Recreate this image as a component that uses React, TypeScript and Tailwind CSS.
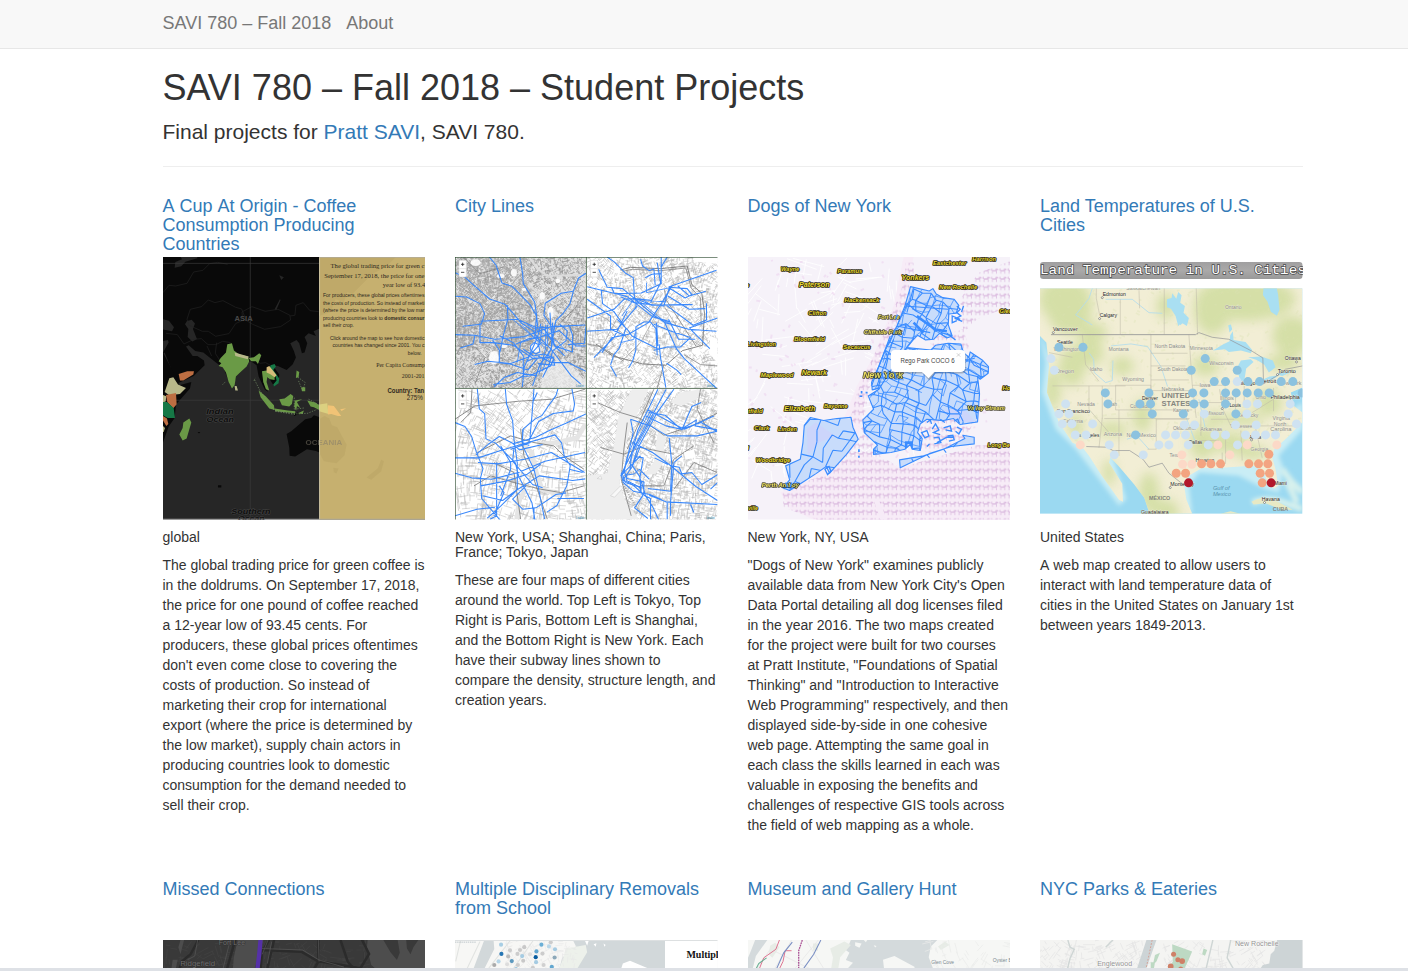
import React from "react";

/* ---------- helpers for generated map texture ---------- */

function rng(seed: number) {
  let s = seed;
  return () => {
    s = (s * 1664525 + 1013904223) % 4294967296;
    return s / 4294967296;
  };
}

/* Short street segments at two perpendicular headings that drift over the area */
function streets(x: number, y: number, w: number, h: number, n: number, len: number, seed: number, base = 0, drift = 0.9) {
  const r = rng(seed);
  let d = "";
  for (let i = 0; i < n; i++) {
    const px = x + r() * w;
    const py = y + r() * h;
    const a = base + Math.sin(px / 90 + seed) * drift + Math.cos(py / 75) * drift * 0.6 + (r() > 0.5 ? Math.PI / 2 : 0);
    const l = len * (0.4 + r());
    d += `M${px.toFixed(0)} ${py.toFixed(0)}l${(Math.cos(a) * l).toFixed(0)} ${(Math.sin(a) * l).toFixed(0)}`;
  }
  return d;
}

/* Jittered grid used for district boundaries */
function mesh(x: number, y: number, w: number, h: number, step: number, jitter: number, seed: number, skip = 0.12, shear = 0) {
  const r = rng(seed);
  const cols = Math.ceil(w / step) + 1;
  const rows = Math.ceil(h / step) + 1;
  const pts: number[][][] = [];
  for (let j = 0; j < rows; j++) {
    pts.push([]);
    for (let i = 0; i < cols; i++) {
      const gx = i * step;
      const gy = j * step;
      const bend = Math.sin(gx / 70 + gy / 110) * 14;
      pts[j].push([
        x + gx + (r() - 0.5) * jitter - gy * shear + bend,
        y + gy + (r() - 0.5) * jitter + gx * shear + Math.cos(gx / 60) * 12,
      ]);
    }
  }
  let d = "";
  for (let j = 0; j < rows; j++)
    for (let i = 0; i < cols; i++) {
      const p = pts[j][i];
      if (i + 1 < cols && r() > skip) d += `M${p[0].toFixed(0)} ${p[1].toFixed(0)}L${pts[j][i + 1][0].toFixed(0)} ${pts[j][i + 1][1].toFixed(0)}`;
      if (j + 1 < rows && r() > skip) d += `M${p[0].toFixed(0)} ${p[1].toFixed(0)}L${pts[j + 1][i][0].toFixed(0)} ${pts[j + 1][i][1].toFixed(0)}`;
    }
  return d;
}

type T = [string, number, number, number, number?];

/* A map label stretched to its own width */
function Labels({ items }: { items: T[] }) {
  return (
    <>
      {items.map(([t, x, y, s, l]) => (
        <text key={t + x} x={x} y={y} fontSize={s} textLength={l} lengthAdjust="spacingAndGlyphs">{t}</text>
      ))}
    </>
  );
}

/* ---------- Coffee map ---------- */

const coffeeSerif: T[] = [
  ["The global trading price for green c", 506, 35, 20, 282],
  ["September 17, 2018, the price for one", 487, 65, 20, 301],
  ["year low of 93.4", 663, 94, 20, 127],
  ["Per Capita Consump", 643, 333, 17, 146],
  ["2001-201", 720, 365, 17, 68],
];
const coffeeSans: T[] = [
  ["For producers, these global prices oftentimes", 483, 124, 16, 305],
  ["the costs of production. So instead of marketi", 483, 146, 16, 305],
  ["(where the price is determined by the low mar", 483, 169, 16, 305],
  ["sell their crop.", 483, 213, 16, 93],
  ["Click around the map to see how domestic", 504, 252, 16, 284],
  ["countries has changed since 2001. You c", 512, 274, 16, 276],
  ["below.", 738, 297, 16, 41],
];

function CoffeeMap() {
  return (
    <svg viewBox="3 3 788 788" className="block h-[262.5px] w-full" fontFamily="'Liberation Sans', sans-serif">
      <rect x="3" y="3" width="788" height="788" fill="#262626" />
      <path fill="#090909" d="M3 3H480V215L455 226 462 240 440 232 428 243 436 262 428 290 420 292 412 262 404 252 385 262 396 285 402 305 392 326 374 342 348 330 332 328 352 356 350 378 336 390 322 368 308 362 304 378 318 408 308 400 290 362 284 328 270 318 254 318 250 334 222 362 214 394 206 390 190 350 184 334 170 326 160 318 124 290 100 285 80 268 72 272 92 300 106 300 126 314 128 328 95 360 48 382 30 345 8 290 3 294Z" />
      <path fill="#090909" d="M3 290L18 318 45 368 52 388 88 378 84 398 42 446 38 486 20 512 3 560Z" />
      <path fill="#262626" d="M3 190l18 4 15 20-6 12-27-5ZM75 195l14-4 10 12-6 16 12 30-14 8-14-14 2-24-10-14ZM3 255l15-3 2 8-17 30ZM338 160l16-30 2 2-13 30ZM352 58l14 6-8 8ZM40 18l20-8-4-7h50v4l-36 10-12 14-20 4Z" />
      <path fill="#090909" d="M374 534L388 526 402 514 430 490 448 486 456 478 480 486V593L462 585 435 580 400 602 383 600 382 575ZM168 688h10v7h-10ZM107 528l8 0-4 5ZM395 476l12-6 4 4-14 6Z" />
      <path fill="none" stroke="#222" strokeWidth="2" d="M3 110l18-22 20 2 34-8 20-34 28-5 20-20 24-4 30 6M75 190l10-30 34-8 20-20 20 8 24-6 38 20 18 5 12 30-30 14-20 30-40 8-22-15-18 0-40-18ZM240 168l30-16 40 14 38-6 36 18 2 14-30 20-48 8-36-15-30-18ZM385 180l14-2 3-30 22-8 20 24 26 3M12 232l34 4 20 28 30-14 22-2 20 18 24 0 20-10 24 4M135 270l14 30M164 260l-4 32 14 22M222 290l28 14 14-2M275 310l20 12 16-2 14 8" />
      <path d="M3 22H472M3 433H472M265 3V791" stroke="#3d3d3d" strokeWidth="2" />
      <path fill="#6a9a46" d="M196 265l14-3 6 22 16 12 26 6 4 14-8 16-22 20-10 10-4 26-8 10-10-20-8-28-10-16-12-4 8-8-8-6 6-10 16-16ZM260 306l16-2 16-12 6 6-10 26-6-8-14 0ZM300 346l14-2 8 6 16 10 0 12-14-2-8-6-2 14 8 26-10-4-8-22ZM64 500l18-12 6 12-14 48-12 6-10-18 10-20ZM290 404l22 18 24 26 2 14-16-4-26-34ZM352 430l16-2 18-14 8 6-4 24-8 8-22-4ZM338 458l40 6 22 2 0 6-60-6ZM399 434l22-4-16 8 10 18-10-6-2 14-6-12ZM404 344l8 4-2 16-8 2ZM418 394h12v12h-10ZM436 434l24 6 12 8v14l-16-8-10-2ZM408 472l18-8-4 10Z" />
      <path fill="#b8b88a" d="M218 290l42 12-2 8-38-10ZM218 390h6l4 14-8 0ZM22 367l12-3 14 22 24 10-18 18-32 4-14-10ZM3 417l10 4-2 16-8 2ZM3 510l6 6-4 12H3Z" />
      <path fill="#bd6e42" d="M50 354l26-8 20 0-2 10-30 18-10 0ZM12 417l30-6 2 34-10 12-18-18ZM3 480l12 8 4 16-6 6-10-16Z" />
      <path fill="#167846" d="M3 438l12 0 20 18 4 30-22 0-14-8ZM326 328l12-4 4 8-8 10 18 26-2 14-14 10-2-6 10-12-4-16-18-18Z" />
      <path fill="#d5bc79" d="M314 334l8-4 8 10 14 18-6 6-14-10-10-4Z" />
      <path fill="none" stroke="#79936a" strokeWidth="2" strokeDasharray="4 4" d="M278 372l16 32 44 60 64 10 36-2 28-12M408 364l22 16-8 24M398 460l30-4M340 466l60 10M276 374l4-8M182 386l8-8M397 425l0 35M440 430l30 16M410 375l10 25" />
      <g fontWeight="bold" fontStyle="italic" fill="#0d0d0d" stroke="#454545" strokeWidth="2.400" paintOrder="stroke">
        <Labels items={[["Indian", 133, 474, 21, 82], ["Ocean", 134, 499, 21, 82], ["Southern", 208, 774, 21, 118], ["Ocean", 228, 797, 21, 80]]} />
      </g>
      <text x="218" y="196" textLength="54" lengthAdjust="spacingAndGlyphs" fontSize="20" fontWeight="bold" fill="#494949">ASIA</text>
      <rect x="472" y="3" width="319" height="788" fill="#c6b06f" />
      <path fill="#bda768" d="M472 3h230l-30 30-40 20-60 60-16-4-10 30-25-10-15 40-34 10ZM472 490l16-10 14 8 8 20 16 6 28 52-6 32-24 24-38-6-12-22H472ZM514 636l16 2-6 15-8-4ZM614 665l34-28 10-25 8 4-8 30-30 26Z" opacity=".8" />
      <path d="M472 446l24-4 4 32-28-8Z" fill="#dbd080" /><path d="M498 448l18 2 22 30-10 0-20-6-10 2ZM535 460l18-3-14 8ZM556 450l6 8" fill="#f1c376" />
      <text x="431" y="567" textLength="110" lengthAdjust="spacingAndGlyphs" fontSize="21" fontWeight="bold" fill="#80796a" opacity=".5">OCEANIA</text>
      <path d="M473 4V791" stroke="#ddd6be" strokeWidth="2" />
      <g fill="#2e2920" fontFamily="'Liberation Serif', serif"><Labels items={coffeeSerif} /></g>
      <g fill="#2e2920">
        <Labels items={coffeeSans} />
        <text x="483" y="191" fontSize="16" textLength="305" lengthAdjust="spacingAndGlyphs">producing countries look to <tspan fontWeight="bold">domestic consur</tspan></text>
        <text x="677" y="410" fontSize="19" fontWeight="bold" textLength="110" lengthAdjust="spacingAndGlyphs">Country: Tan</text>
        <text x="735" y="431" fontSize="19" textLength="48" lengthAdjust="spacingAndGlyphs">275%</text>
      </g>
      <path d="M3 790H791M472 4H791" stroke="#aaa" strokeWidth="2" />
    </svg>
  );
}

/* ---------- Four city subway maps ---------- */

const tokyoA = streets(3, 3, 392, 392, 5200, 9, 11);
const tokyoWest = streets(3, 3, 230, 280, 2600, 7, 13);
const tokyoB = streets(3, 3, 392, 392, 700, 10, 19);
const parisA = streets(400, 3, 392, 392, 2700, 12, 23);
const shangA = streets(3, 400, 392, 392, 1050, 26, 31, 0.15, 0.35);
const nycA = streets(400, 400, 392, 392, 2900, 15, 47, 0.45, 0.25);
const pale = [[65, 20, 30, 20], [140, 60, 24, 12], [180, 50, 18, 22], [244, 275, 32, 30], [120, 305, 30, 40], [265, 120, 16, 22], [290, 170, 18, 36], [150, 270, 18, 12], [312, 75, 14, 14], [210, 100, 14, 10]];

function CityLinesMap() {
  return (
    <svg viewBox="3 3 788 788" className="block h-[262.5px] w-full" fontFamily="'Liberation Sans', sans-serif" fill="none">
      <defs>
        <clipPath id="q1"><rect x="3" y="3" width="393" height="393" /></clipPath>
        <clipPath id="q2"><rect x="399" y="3" width="392" height="393" /></clipPath>
        <clipPath id="q3"><rect x="3" y="399" width="393" height="392" /></clipPath>
        <clipPath id="q4"><rect x="399" y="399" width="392" height="392" /></clipPath>
      </defs>
      <rect x="3" y="3" width="788" height="788" fill="#fff" />
      <g clipPath="url(#q1)">
        <rect x="3" y="3" width="393" height="393" fill="#e2e2e2" />
        <path d={tokyoA} stroke="#949494" strokeWidth="1.800" />
        <path d={tokyoWest} stroke="#a2a2a2" strokeWidth="1.800" />
        <path d={tokyoB} stroke="#eee" strokeWidth="2" />
        <path d="M225 3l24 34 30 22 117-2M222 85l46 40 20 60 14 30" stroke="#dcdcdc" strokeWidth="6" />
        <g fill="#fff" opacity=".9">{pale.map(([x, y, w, h]) => <ellipse key={x + y} cx={x} cy={y} rx={w / 2} ry={h / 2} />)}</g>
        <path d="M262 396l4-50 24-28 40-10 20 20 46 50v20Z" fill="#eee" opacity=".75" />
        <path d="M28 3l50 50 70-20M3 270l60 4 30 30-30 80M340 200l20 30-8 60M200 396l40-25 30-70 40-90 86-90M150 130l30 160" stroke="#777" strokeWidth="2" />
      </g>
      <g clipPath="url(#q2)">
        <path d={parisA} stroke="#b3b3b3" strokeWidth="1.600" />
        <path d="M718 3h73v20l-60-6ZM770 240l21 10v70l-26-28ZM555 215l16-6 12 18-14 12-16-6ZM610 215l14 4 0 24-12-6ZM720 268l24 14-14 16-16-8Z" fill="#fff" />
        <path d="M430 300l100-190 30 20 70 20 50 80 60 40M400 160l60 30 70 66M500 320l60-60 100-180" stroke="#999" strokeWidth="2" />
        <path d="M500 42l30-8 90 4 80-8 14 56 30 26 8 60-6 96-60 16-50 44-70-4-90-24-50-36" stroke="#6f6f6f" strokeWidth="2.500" />
        <path d="M506 46l30-6 84 4 76-8 16 60 28 30 2 80M400 264l40 8 70 44M690 296l50 30 50 4M630 326l-20 70M632 100l4 30 90 140" stroke="#888" strokeWidth="2.500" />
        <path d="M540 145l70 40 30 20 40 90" stroke="#ddd" strokeWidth="7" />
      </g>
      <g clipPath="url(#q3)">
        <path d={shangA} stroke="#b9b9b9" strokeWidth="1.600" />
        <path d="M188 791l8-60 20-30M210 570l24 20 10 50 20 60 60 20M250 565l60-5 60-14 24-40" stroke="#e5e5e5" strokeWidth="14" />
        <path d="M3 490l60-40 130-14 100-6 100-30M20 500l30-30 4-70M70 590l40-20 60-30 70 20 60 10 30 30 60 40M60 690l50-30 70 20 80 20 60 10 70-20M200 520l10 80 30 70 40 120M120 620l60 30 20 140" stroke="#787878" strokeWidth="2.500" />
      </g>
      <g clipPath="url(#q4)">
        <path d={nycA} stroke="#b4b4b4" strokeWidth="1.500" />
        <path d="M534 400h50l-28 60-34 80-18 90-8 50 20 60 40 51H400V660l60-8 20-80 14-90Z" fill="#eee" />
        <path d="M552 640l-40 20-6 20 20 40 40 60" stroke="#aaa" strokeWidth="6" strokeDasharray="3 4" />
        <path d="M650 440l30-30 60-10-10 30-50 20ZM624 500l16 14-10 70 6 26-30 44-36 4 30-40 10-80Z" fill="#ededed" />
        <path d="M430 440l70 30 60 18 70 50 80-26 80-40M440 575l70 20 50-20 100 20M520 500l-10 80-8 90 30 110M600 400l-80 180M560 690l70 0 30-80 60-40M740 400l-10 60 50 100M660 700l60-80 70 30" stroke="#7e7e7e" strokeWidth="2.500" />
        <path d="M760 700l24-10-4 40-18 10ZM690 590l30-10 6 24-30 8Z" fill="#fff" />
        <path d="M470 720l30-30 8 6-26 28ZM430 668l10-8 4 10Z" fill="#f8f8f8" stroke="#aaa" />
      </g>
      <g stroke="#3a88fb" strokeWidth="3.200" strokeLinejoin="round">
        <g clipPath="url(#q1)">
          <path d="M3 50l28 12 22 20 54 47 46 16 20 22 30 35 34 22 20 30M3 121l35 2 40 20 14 30-10 32-56 6M106 3l20 24 18 54 30 10 20 20 34 35 20 34 4 40M198 3l8 50 2 30 34 55 6 40-6 70M396 52l-22 14-16 40-36 6-48 30-4 36 20 30 10 60M358 108l-10 36-22 30-20 20-12 60M3 236l60 2-6 26-38 12M62 238l60 12 90-8 80-30 102-5M78 200l0 60 40 0 60 8 60 40 50-4M80 196l110-6 60 26 96-6 10 28 0 50-50-16-40-60M116 252l20 30 0 38 30 4 56-20 40-44M62 326l40-10 60 6 60 20 30-36M160 148l2 40-14 50-10 50M118 386l50-6 40-20 0-60-30-40-40-20M205 393l6-60 40-90 10-40M236 390l20-60 36-50 4-80M262 250l30 30 60 80 28 24M252 300l40 20 50 0 54 26M250 360l-60-10-40 15-30 28M264 210l-4 40-10 24M288 170l4 60 10 40 30 30M186 264l40-16 30-4 60-20 50 46 30 0M208 280l30 20 30-6 30 10 4 24-50-5M396 212l-4 50-50 4M230 270l10-10 14 6 4 22-14 6-14-12ZM220 316l20-10 60 0-10 24-64 30-22 2M318 205l22 20-4 30-40 30-10 40-20 40" />
          <path strokeWidth="2.500" d="M176 190l70 60 34 20M206 210l80 80M220 206l90 50 30 34M275 206v70l-20 80M281 206v60M301 206l-6 60-30 80M190 320l10-60 50-16" />
        </g>
        <g clipPath="url(#q2)">
          <path d="M460 3l20 14 34 34 24 14M622 3v80l-60 28-80 2-10-20M640 3l-18 30M538 65l4 64 60 50 30 20 36 80 24 30 98 90M434 40l26 54 46 4 36 30 94 10M400 92l80 20 40 10 76 60 50 15M400 186l80-26 30-30 36-2 50 20 90-2 30 0M400 226l90-6 60-70M490 190l30 30 14 20 80 40M420 305l60-60 40-80M444 290l30-45 50-10 60-35 40-60 30-50M470 327l10-30 16-20 20-60-36-50-34-24-4-40M524 336l12-20 10-34 0-70 24-14 20 0 16 20 4 80M488 362l-18-32M560 10l6 20 20 14 14-6 4 50M644 93l144-50M646 94l54 4 14 18-20 10-48-30ZM646 96l-16 54-90-10-40-18M638 148l80 60 40-16 0-50M754 158l-48 2-64-40M634 200l70 20 84 6M706 216l85-30M610 20l10 60-30 60M756 106l-50 14-34-30M600 283l40-10 40 0 30-28-60-20-50-20M616 265l4 40 16 90M708 218l60 60M724 250l-50 0-30-60M638 322l30 20 14 14M400 130l70 50 0 40 46 20M608 200l4 70M574 65l20-10 28-2" />
          <path strokeWidth="2.500" d="M548 132l20 12 60 50 30 12M546 160v-30l20 0 30 20M500 260l40-10 4-20M540 130l-36 50M578 80v30l66-14" />
        </g>
        <g clipPath="url(#q3)">
          <path d="M70 399l6 60 16 14 4 76 28 12 30 30 30 30 10 40 40 80 14 80M154 399l4 46 18 50 4 56 10 70 0 80-50 50-40 36M240 399l-6 80-6 66M236 440l14-30M312 399l-6 20-22 30-20 30-20 10-36 30-4 40 22 10M354 399l8 46-4 20-60 8-44 24-30 60M396 474l-60 28-50 22-40 20-70 20M3 500l30 12 20 30 14 46 20 50-8 30 4 60 60 70M3 606l70 0 60-20 50-15 120-34 20 24 8 40 18 28-10 60-30 60-30 20M66 596l36-30 34-24 40 20 20 20 70-16M72 620l60 4 80-14 80-20 100 60M3 652l50 14 60 4 80-20 80-34 120-26M80 690l80-15 60-20 40-30M86 720l60 14 40-30 70-44 100 14 38-5M3 780l66-20 54-6M128 620l0 160-20 10M206 520l0 50 34 70 14 60 18 90M180 576l-4 40 60 70 30 10M140 570l30 50 0 20-30 80M230 560l-60 20M216 690l-40 40 30 30 40-4 60-40 30-5M310 728h80M346 640l40 10M190 640l0 60M120 780l30-70-14-20M240 756v34" />
        </g>
        <g clipPath="url(#q4)">
          <path d="M612 400l-30 62-30 60-16 64-34 70 6 24 30 26 50 10 36 16M660 400l-50 70-60 110-16 54-28 40M637 400l-64 120-40 70-4 50M582 462l80 44 30 14 88-40M576 480l60 30 46 10 60-20 46 26M584 470l50 8 50 44 30-70 28-12M682 520l46-28-4 18 66 12M530 490l60 20 50 30 90 0 60-14M530 490l8 40-14 60-14 60M536 560l60 30 50 36 80 66 65 42M544 602l24 4-10 60 4 46M646 546l8 80-4 80-68-8M684 600l-24 20-10 120 0 40M652 630l24 4 8 20 30-4 30 36 48-30M502 652l4 20 30 14 40 36 20 30 18 39M510 644l10 24 50 10 0 40 20 10 0 63M586 718l50 20 155 8M560 570l-24 60 20 30 20 60M770 700l21-20M556 690l10 30-24 36 40 32M640 740l0 50M500 660l60-60M602 606l40 20M556 640l30 30M720 770l-10-24" />
          <path strokeWidth="2.500" d="M590 464l-50 90-20 50-12 50M596 464l-50 100-20 60M604 470l-60 110" />
          <path strokeWidth="3" d="M556 640l-14 14-26 4 2 16 40 20 10-8M504 650l10 30 50 16" />
        </g>
      </g>
      <path d="M397.500 3V791M3 397.500H791M4 3V791M3 4H791" stroke="#2b4a2d" strokeWidth="2.500" opacity=".9" />
      {[[16, 14], [411, 14], [16, 409], [411, 409]].map(([x, y]) => (
        <g key={`${x}-${y}`}>
          <rect x={x - 1} y={y - 1} width="22" height="50" rx="4" fill="#fff" stroke="#ccc" strokeWidth="1.500" />
          <path d={`M${x + 5} ${y + 11}h10m-5-5v10M${x + 5} ${y + 35}h10`} stroke="#222" strokeWidth="2.400" />
          <path d={`M${x} ${y + 24}h20`} stroke="#ccc" strokeWidth="1.500" />
        </g>
      ))}
      {[[366, 393], [758, 393], [366, 788], [758, 788]].map(([x, y]) => <text key={`${x}-${y}`} x={x} y={y} fontSize="8" fill="#1c7ca5">Leaflet</text>)}
    </svg>
  );
}

/* ---------- Dogs of New York ---------- */

const dogPlaces: T[] = [
  ["Wayne", 102, 45, 18, 55], ["Paramus", 272, 51, 17, 74], ["Paterson", 156, 93, 21, 92], ["Hackensack", 293, 137, 18, 104], ["Clifton", 184, 178, 18, 55],
  ["Yonkers", 464, 71, 21, 83], ["Eastchester", 558, 27, 18, 100], ["Harrison", 676, 16, 18, 72], ["New Rochelle", 577, 99, 18, 114], ["Fort Lee", 393, 188, 18, 65],
  ["Cliffside Park", 351, 233, 18, 113], ["Glen", 758, 172, 18, 38], ["Livingston", 0, 269, 18, 87], ["Bloomfield", 142, 254, 18, 92], ["Secaucus", 289, 278, 18, 82],
  ["Maplewood", 41, 363, 18, 98], ["Newark", 164, 358, 21, 76], ["New York", 348, 365, 27, 120], ["Elizabeth", 112, 464, 21, 93], ["Bayonne", 231, 457, 18, 71],
  ["tfield", 3, 470, 18, 44], ["Clark", 22, 522, 18, 45], ["Linden", 93, 525, 18, 57], ["Woodbridge", 27, 619, 18, 103], ["Perth Amboy", 44, 692, 18, 112],
  ["ville", 3, 762, 18, 30], ["Ho", 767, 401, 18, 24], ["Valley Stream", 662, 463, 18, 112], ["Long Be", 723, 574, 18, 66], ["s", -3, 93, 18], ["l", 1, 582, 18],
];
const overlaid = ["New York", "Perth Amboy", "Cliffside Park", "Valley Stream", "Fort Lee"];
const bronx = "M491 92L547 105 558 98 568 114 588 125 622 130 636 148 628 172 606 174 604 206 616 240 600 246 578 232 560 250 536 252 512 238 500 250 480 275 440 330 400 396 376 402 374 380 396 330 420 270 450 210 474 150Z";
const queens = "M440 330L480 275 552 282 566 268 604 262 642 264 650 290 666 304 670 288 706 312 725 332 724 352 700 370 692 362 698 414 692 498 640 506 620 488 590 494 540 490 520 504 512 530 526 548 520 584 496 580 490 566 474 580 432 590 380 596 380 580 392 568 352 530 348 492 380 460 364 420 396 400Z";
const staten = "M190 485L230 494 270 488 312 484 318 514 334 550 298 596 248 652 238 632 206 654 166 680 128 704 108 696 128 672 116 630 160 610 168 560 172 508Z";
const rockaway = "M458 612L530 600 590 580 654 548 648 538 682 544 682 564 614 572 550 592 460 636Z";
const cityMesh = mesh(330, 60, 620, 560, 27, 21, 7, 0.16, 0.3);
const fineMesh = mesh(470, 60, 340, 560, 24, 16, 71, 0.38, 0.42);
const islandMesh = mesh(200, 440, 260, 300, 34, 24, 17, 0.3, 0.45);
const paleRoads = streets(3, 3, 500, 650, 150, 70, 9, 0.5, 0.8);
const blotches = streets(3, 3, 720, 650, 110, 9, 88);

function DogsMap() {
  return (
    <svg viewBox="3 3 788 788" className="block h-[262.5px] w-full" fontFamily="'Liberation Sans', sans-serif">
      <defs>
        <pattern id="dog" width="25" height="25" patternUnits="userSpaceOnUse" x="6" y="8">
          <path d="M2 4h3v5h9l2-5 6 1 2 4-5 1v10h-2.500v-7H7v7H4.500v-9L1 10Z" fill="#ddbfe1" />
        </pattern>
        <clipPath id="nyc"><path d={bronx + queens} /></clipPath>
        <clipPath id="si"><path d={staten} /></clipPath>
      </defs>
      <rect x="3" y="3" width="788" height="788" fill="#f6f2f9" />
      <path d={paleRoads} stroke="#fff" strokeWidth="2.500" fill="none" />
      <path d={blotches} stroke="#ecd3ee" strokeWidth="6" fill="none" opacity=".6" />
      <path fill="#f7ecf7" d="M110 690L240 655 330 570 360 390 450 180 484 80 500 3 470 3 440 150 380 300 330 390 290 490 335 550 240 650 100 710 130 760 200 791H791V570H700L460 636 350 590Z" />
      <path fill="url(#dog)" d="M105 700L240 655 335 555 345 520 310 490 330 410 430 190 474 70 476 20H500V70L490 95 440 270 365 400 350 510 400 600 460 636 690 568H791V791H210L110 755ZM640 130l55-80 96-35V150L690 190 650 230ZM540 250l110-30 20 65-60 0-30 10ZM520 500l80-20 80 20-30 60-100 30-40-10Z" />
      <path d="M380 730l15 0 25 61h-20Z" fill="#f6ebf7" />
      <g fontWeight="bold" fontStyle="italic" fill="#eadc39" stroke="#28240e" strokeWidth="5" strokeLinejoin="round" paintOrder="stroke">
        <Labels items={dogPlaces.filter(([t]) => !overlaid.includes(t))} />
      </g>
      <g fill="#c8dcfb" stroke="#3a8cff" strokeWidth="3.400" strokeLinejoin="round">
        <path d={bronx} /><path d={queens} /><path d={staten} /><path d={rockaway} />
      </g>
      <path d="M590 462l40-4 30 10 26 30-36 0-44-20ZM180 520l26-20 60 40-50 20-34 40Z" fill="#ccd5fb" />
      <g fill="none" stroke="#3a8cff" strokeWidth="3.300">
        <g clipPath="url(#nyc)">
          <path d={cityMesh} />
          <path d={fineMesh} strokeWidth="2.200" />
          <path d="M478 560h16v20h-16ZM560 220l40 6M510 180l40 30M500 200l30 30M540 200l30 26" strokeWidth="8" />
        </g>
        <g clipPath="url(#si)"><path d={islandMesh} /></g>
        <path d="M500 94l-20 76M474 150l130 10M450 210l100 20M430 240l-56 150M440 250l-50 140M642 340l18 14 40 10M654 316l30-10M662 300l20 28 44 20M494 608l6 10M540 596l8 10M590 580l8 10M618 574l14-14" />
        <path d="M630 150l10 10-10 10 12 10-16 8 20 8M640 190l-24-10 0 20 14-6M650 150l-6 18M524 530l16-6 6 16-12 6ZM540 572l8-8M556 520l10-16 10 18-16 8 20 6M590 516l20-6 4 16-18-4M560 546l16-2 6 16-20 4M602 540l16-2 4 14-16 4M630 514l14 6-8 14-10-8M580 490l14 10M540 500l10-8 4 12M622 496l10-6 6 12M570 560l30-16 20 0M234 640l12-8 6 14-10 10ZM600 232l26 20" strokeWidth="4" />
        <path d="M344 405v8M338 421h8M336 580v8M336 600v6M356 410l6 0" strokeWidth="5" />
      </g>
      <g fontWeight="bold" fontStyle="italic" fill="#eadc39" stroke="#28240e" strokeWidth="5" strokeLinejoin="round" paintOrder="stroke" opacity=".8">
        <Labels items={dogPlaces.filter(([t]) => overlaid.includes(t))} />
      </g>
      <path d="M404 349l6 22M424 346l-2 22M442 344l6 28M116 680l6 14M134 680l-4 14M444 220l-4 14M452 176l-6 14M686 450l-4 16" stroke="#3a8cff" strokeWidth="4" />
      <path d="M444 284H642q13 0 13 13V334q0 14-13 14H562L545 369 525 348H444q-12 0-12-14V297q0-13 12-13Z" fill="#555" opacity=".35" transform="translate(2 5)" />
      <path d="M444 282H642q13 0 13 13V334q0 14-13 14H562L545 367 525 348H444q-12 0-12-14V295q0-13 12-13Z" fill="#fff" />
      <text x="461" y="321" fontSize="19" textLength="162" lengthAdjust="spacingAndGlyphs" fill="#444">Rego Park COCO 6</text>
      <path d="M630 292l10 10m0-10l-10 10" stroke="#bbb" strokeWidth="2" />
    </svg>
  );
}

/* ---------- Land temperatures ---------- */

const dotGroups: { fill: string; pts: number[][] }[] = [
  { fill: "#cfe2f1", pts: [[36, 308], [46, 343], [595, 377], [80, 444], [60, 474], [90, 474], [70, 504], [99, 504], [161, 504], [109, 537], [141, 537], [624, 444], [656, 444], [754, 444], [496, 474], [624, 474], [748, 474], [436, 507], [467, 507], [590, 507], [652, 507], [773, 504], [380, 537], [410, 537], [440, 537], [528, 537], [560, 537], [620, 537], [650, 537], [680, 537], [710, 537], [211, 567], [360, 567], [390, 567], [448, 567], [508, 567], [596, 567], [226, 597], [313, 597]] },
  { fill: "#8cc2df", pts: [[60, 274], [132, 274], [499, 308], [457, 343], [595, 343], [526, 377], [560, 377], [627, 377], [662, 377], [727, 377], [762, 377], [199, 411], [330, 411], [461, 411], [495, 411], [560, 411], [592, 411], [625, 411], [658, 411], [691, 411], [790, 411], [207, 444], [303, 444], [335, 444], [465, 444], [496, 444], [560, 444], [340, 474], [433, 474], [591, 474], [290, 537]] },
  { fill: "#fcd9c7", pts: [[124, 567], [537, 567], [625, 567], [714, 567], [429, 597], [573, 597], [431, 625], [459, 625]] },
  { fill: "#f3a481", pts: [[690, 595], [488, 624], [516, 624], [545, 624], [630, 624], [659, 624], [687, 624], [412, 652], [440, 652], [664, 652], [692, 652], [670, 681]] },
  { fill: "#b2182b", pts: [[449, 681], [697, 681]] },
];
const states: T[] = [
  ["Saskatchewan", 262, 103, 16, 102], ["Ontario", 558, 158, 16, 50], ["North Dakota", 347, 276, 16, 92], ["Minnesota", 452, 281, 16, 70], ["Montana", 209, 285, 16, 60], ["Washington", 44, 285, 16, 78],
  ["South Dakota", 356, 344, 16, 90], ["Wisconsin", 511, 327, 16, 73], ["Oregon", 50, 352, 16, 55], ["Idaho", 152, 344, 16, 38], ["Wyoming", 250, 374, 16, 65], ["Nebraska", 368, 404, 16, 68], ["Iowa", 482, 392, 16, 32],
  ["Nevada", 115, 449, 16, 53], ["Utah", 206, 449, 16, 28], ["Colorado", 273, 456, 16, 60], ["Kansas", 402, 468, 16, 48], ["Illinois", 543, 432, 16, 42], ["Ohio", 650, 430, 16, 32], ["Missouri", 503, 476, 16, 52], ["Kentucky", 596, 484, 16, 62],
  ["California", 72, 500, 16, 60], ["Arizona", 194, 540, 16, 55], ["New Mexico", 263, 542, 16, 88], ["Oklahoma", 402, 521, 16, 68], ["Arkansas", 484, 525, 16, 66], ["Tennessee", 573, 515, 16, 68], ["Virginia", 701, 491, 16, 52], ["North", 705, 511, 16, 38], ["Carolina", 694, 526, 16, 64], ["Texas", 392, 602, 16, 38], ["Georgia", 635, 584, 16, 53], ["New York", 720, 388, 16, 68],
];
const towns: T[] = [
  ["Edmonton", 191, 120, 16, 70], ["Calgary", 182, 184, 16, 52], ["Vancouver", 42, 225, 16, 74], ["Seattle", 54, 264, 16, 48], ["Ottawa", 738, 312, 16, 48], ["Toronto", 717, 351, 16, 54], ["Detroit", 663, 382, 16, 49], ["Chicago", 588, 387, 16, 62],
  ["Denver", 309, 432, 16, 48], ["San Francisco", 53, 470, 16, 100], ["Los Angeles", 103, 542, 16, 78], ["St. Louis", 550, 453, 16, 56], ["Philadelphia", 695, 428, 16, 88], ["Dallas", 450, 565, 16, 40], ["Houston", 470, 618, 16, 56], ["Atlanta", 632, 548, 16, 35], ["Monterrey", 394, 691, 16, 72], ["Miami", 706, 687, 16, 38], ["Havana", 669, 734, 16, 54], ["Guadalajara", 306, 774, 16, 83],
];
const greens = [[90, 150, 70, 85], [100, 330, 40, 60], [150, 290, 45, 40], [40, 400, 25, 60], [60, 130, 60, 60], [620, 130, 150, 65], [520, 160, 55, 75], [760, 240, 60, 60], [500, 330, 40, 30], [730, 320, 50, 24], [610, 490, 65, 18], [690, 440, 40, 40], [250, 330, 34, 28], [310, 480, 28, 50], [220, 520, 45, 22], [570, 560, 60, 30], [490, 560, 38, 50], [640, 590, 50, 20], [210, 650, 18, 40], [330, 710, 30, 60], [380, 770, 40, 40], [110, 510, 22, 35], [380, 150, 26, 40], [160, 230, 45, 30], [525, 490, 25, 24]];
const tempSpeckle = streets(3, 98, 788, 460, 360, 10, 93);
const coast = "M3 97H791V395L756 410 765 450 791 470 790 500 742 548 706 580 700 604 710 640 718 690 706 698 686 682 674 645 640 628 606 632 570 634 530 638 490 636 450 660 436 690 442 730 460 774H332L316 726 286 686 240 632 214 604 210 620 250 684 252 738 240 732 186 656 150 600 130 574 100 560 60 500 40 450 24 410 30 330 22 260 3 240Z";

function TemperatureMap() {
  return (
    <svg viewBox="3 3 788 788" className="block h-[262.5px] w-full" fontFamily="'Liberation Sans', sans-serif">
      <defs>
        <clipPath id="tm"><rect x="3" y="97" width="788" height="677" /></clipPath>
        <clipPath id="land"><path d={coast} /></clipPath>
        <filter id="soft"><feGaussianBlur stdDeviation="16" /></filter>
        <filter id="edge"><feGaussianBlur stdDeviation="7" /></filter>
        <linearGradient id="band" x2="0" y2="1"><stop offset="0" stopColor="#a09fa0" /><stop offset=".5" stopColor="#aaa9a9" /><stop offset="1" stopColor="#999" /></linearGradient>
      </defs>
      <rect x="3" y="18" width="788" height="51" rx="10" fill="url(#band)" />
      <text x="3" y="53" fontSize="37" textLength="798" lengthAdjust="spacingAndGlyphs" fontFamily="'Liberation Mono', monospace" fill="#fff" stroke="#4a4a4a" strokeWidth="4" paintOrder="stroke">Land Temperature in U.S. Cities</text>
      <g clipPath="url(#tm)">
        <rect x="3" y="97" width="788" height="677" fill="#9bd9f1" />
        <path filter="url(#edge)" d="M3 230L20 320 10 410 50 520 110 580 180 670 240 750 262 730 220 600 460 774 450 690 480 650 600 660 680 700 720 710 735 640 720 600 791 520V440L700 500 500 610 300 610 100 510 30 300Z" fill="#c9edf5" />
        <path d="M640 740q50-20 110 6l41 14M730 640l30 40 31 30M745 680l30 60" stroke="#d8f1ed" strokeWidth="18" fill="none" filter="url(#edge)" />
        <path d={coast} fill="#f2eed5" />
        <g clipPath="url(#land)">
          <g fill="#cddb9b" opacity=".8" filter="url(#soft)">{greens.map(([x, y, a, b]) => <ellipse key={`${x}-${y}`} cx={x} cy={y} rx={a} ry={b} />)}</g>
          <path d={tempSpeckle} stroke="#dce2b4" strokeWidth="5" opacity=".35" />
        </g>
        <path d="M638 738q40-26 90 6l34 18-32 0-50-20-36 4ZM545 774l30-8 30 8ZM738 680l8 14M752 702l8 4" fill="#e7e9c4" />
        <path fill="#a9dff2" d="M674 97h40l4 20 4 44-8 18-18-12-10-30-14-20ZM384 130l14-4 2-14 12 16 6-20 10 10-4 22 14 10-4 20 16 16-6 24-16-10-10 10-8-30-14-22-12-4ZM416 178l14-6 8 24-14 12ZM522 284l30-18 20-10 2-18 8-12 2 26 36 6 20 24-4 10-30-8-36 4-12-8ZM604 376l-10-40 12-22 30-4 8 8-22 20-6 38ZM628 304l40-2 34 12 8 20-20 16-14-24-22-14ZM656 378l36-16 28-4-30 22ZM712 354l42-12 10 4-34 14ZM568 208l8-2 4 14-8 10Z" />
        <path fill="none" stroke="#b2dced" strokeWidth="2.500" d="M150 290l14 20 2 40 34 30 20-6 2-60M216 270l60-6 50 8 40 60 20 60M160 97l-10 30-40 50 50 30M200 130l80 0 50 40 40 2M330 580l-36-40-30 10M440 480l30 80M480 430l20 90" />
        <path fill="none" stroke="#bdbaa9" strokeWidth="1.600" d="M172 97v30l10 50M244 130V235M300 97l2 60M376 97V235M472 97l4 140M36 236H470M30 290l70 14M130 236l10 90 40 50M40 390H260M190 390v98M150 390v70l60 70M230 388h106v74H230ZM336 236V470M336 330H440M336 292H446M336 372H450M336 404H460M348 462H460M240 462V600M352 490h20V490H450M352 490v90H326M196 488H452M190 486l-10 90M450 236l10 150 12 100M460 388h100M460 440h96M486 480v60M542 400l10 60 24 50M590 400v60M616 390v50M480 554h60M574 510h190M560 524v100M606 524l4 90M650 516l20 90M516 490h70M640 470l64-40M704 396v70M550 640l0-50" />
        <path d="M36 236H470L480 230 520 244 570 250 640 286 672 306 674 384 710 362 740 340 791 330M142 572L204 574 222 584 272 584 312 610 330 634 370 622 390 652 438 690" fill="none" stroke="#8f9196" strokeWidth="2" />
        <g fill="#8a8b86" stroke="#f5f3e2" strokeWidth="1.200" paintOrder="stroke"><Labels items={states} /></g>
        <g fill="#85857f" fontWeight="bold">
          <Labels items={[["UNITED", 368, 425, 21, 86], ["STATES", 368, 449, 21, 86], ["MÉXICO", 330, 732, 17, 64], ["CUBA", 702, 766, 16, 46]]} />
        </g>
        <g fill="#222" stroke="#f7f5e5" strokeWidth="1.600" paintOrder="stroke"><Labels items={towns} /></g>
        <g fill="#5993ae" fontStyle="italic" fontSize="17"><text x="522" y="702">Gulf of</text><text x="522" y="719">Mexico</text></g>
        <g fill="#fff" stroke="#444" strokeWidth="1.500">{[[190, 125], [182, 188], [43, 230], [773, 318], [716, 356], [550, 458], [638, 552], [394, 695], [677, 740]].map(([x, y]) => <circle key={x} cx={x} cy={y} r="3" />)}</g>
        {dotGroups.map((g) => <g key={g.fill} fill={g.fill}>{g.pts.map(([x, y]) => <circle key={`${x}-${y}`} cx={x} cy={y} r="13.500" />)}</g>)}
      </g>
    </svg>
  );
}

/* ---------- Second row previews ---------- */

const darkRoads = streets(3, 30, 575, 100, 170, 26, 5, 0.5);
const lightRoads = streets(960, 30, 200, 100, 150, 16, 6);
const islandRoads = streets(515, 30, 225, 100, 50, 26, 8);
const parkRoads = streets(826, 30, 290, 100, 150, 24, 12);
const eastRoads = streets(1170, 30, 290, 100, 120, 22, 14);

function MissedMap() {
  return (
    <svg viewBox="3 30 735 735" className="block h-[262.5px] w-full" fontFamily="'Liberation Sans', sans-serif" fill="none">
      <rect x="3" y="30" width="735" height="735" fill="#393939" />
      <path d={darkRoads} stroke="#424242" strokeWidth="2" />
      <path d="M212 30h72l-26 85h-60l4-40ZM576 30h162v90H610l-24-20-12-50ZM30 85l14 0-6 30H26ZM52 30h10l-10 40-6-20Z" fill="#4d4d4d" />
      <path d="M620 30l20 34 18 22 8-20-6-36ZM684 30h34l-14 20-8 20-10-16Z" fill="#393939" />
      <path d="M102 30l-22 40-24 20-8 25M205 30l-24 85M300 30l-20 35-4 50M314 30l-12 50-8 35M280 58l110 5 46 26 120 20 24-40-20-40M438 30v60l-14 25M500 30l20 60 20 25" stroke="#2b2b2b" strokeWidth="7" />
      <path d="M100 30l-8 45-20 10M297 30l-16 40M280 54l114 4 46 28 70 20M190 35l-20 80M438 30l2 60M307 36l-12 60" stroke="#585858" strokeWidth="2" />
      <path d="M276 30c-2 30-4 50-10 90" stroke="#5530a8" strokeWidth="12" />
      <g fill="#707070" stroke="#2b2b2b" strokeWidth="2" paintOrder="stroke"><Labels items={[["Fort Lee", 159, 43, 19, 74], ["Ridgefield", 51, 102, 20, 98]]} /></g>
    </svg>
  );
}

const removalDots = [[949, 43, "#a8cee4"], [950, 69, "#2676b4"], [942, 90, "#b5d5e8"], [930, 100, "#aaa"], [974, 59, "#ccc"], [969, 76, "#bbb"], [979, 89, "#5d99be"], [1002, 58, "#cacaca"], [1014, 50, "#c8c8c8"], [995, 69, "#ccc"], [1008, 75, "#a5cbe2"], [1011, 88, "#c8c8c8"], [996, 100, "#ccc"], [991, 112, "#78b3d6"], [1048, 62, "#63a7d0"], [1046, 78, "#075ca0"], [1047, 92, "#a5cbe2"], [1062, 43, "#6bafd6"], [1083, 48, "#b8d6e8"], [1100, 56, "#a5cbe2"], [1099, 79, "#8ca8b9"], [1065, 68, "#ccc"], [1091, 105, "#63a7d0"], [1068, 100, "#d0d0d0"], [1038, 108, "#ccc"], [966, 98, "#ddd"], [1088, 36, "#ccc"], [1030, 70, "#ddd"]] as [number, number, string][];

function RemovalsMap() {
  return (
    <svg viewBox="820 30 735 735" className="block h-[262.5px] w-full" fill="none">
      <rect x="820" y="30" width="735" height="735" fill="#f7f7f5" />
      <path d="M928 30h-26l-32 85h30l30-60ZM1150 30h258v90H1110l10-40 40-30Z" fill="#d2d8da" />
      <path d="M1130 54l56-10 4 20-30 50h-50l14-36Z" fill="#edf1eb" /><path d="M1290 96l20-8 52 22 0 10h-80ZM1183 30h12l-5 16ZM1208 42l8-3-2 10ZM1236 40l6 4-4 5Z" fill="#fff" />
      <path d={lightRoads} stroke="#e6e6e6" strokeWidth="1.500" /><path d="M836 30l-14 60M890 34l-38 80M976 30l-66 85M1040 30l-60 85" stroke="#e1e3e1" strokeWidth="3" />
      {removalDots.map(([x, y, c]) => <circle key={`${x}-${y}`} cx={x} cy={y} r="5.800" fill={c} />)}
      <rect x="1408" y="30" width="147" height="735" fill="#fff" />
      <path d="M820 31H1555" stroke="#dde0e1" strokeWidth="3" /><path d="M820 36h60" stroke="#a6b3ba" strokeDasharray="4 2" strokeWidth="2" />
      <text x="1468" y="81" fontFamily="'Liberation Serif', serif" fontSize="28" fontWeight="bold" fill="#111">Multiple</text>
    </svg>
  );
}

function MuseumMap() {
  return (
    <svg viewBox="8 30 735 735" className="block h-[262.5px] w-full" fontFamily="'Liberation Sans', sans-serif" fill="none">
      <rect x="8" y="30" width="735" height="735" fill="#d4dadc" />
      <path d="M62 30H296l-6 14-14 10 16 12-10 20 20 8-20 21H20l10-40ZM8 30h20l-14 36-6 14ZM308 36l18 4-6 12-12-6ZM332 30h10l-4 6ZM360 45l8 2-4 4ZM386 85l32-10 56 30 2 15h-86ZM514 78l6-30 18-18h205v90H530Z" fill="#f6f7f5" />
      <path d="M238 54l40-20 18 10-30 34-6 37h-20l6-36ZM70 46l14-8 12 12-20 30-10-10ZM190 40h14v20h-14ZM540 48l20-14 12 10-24 14Z" fill="#e7ece6" />
      <path d="M70 56l-40 59M130 30l-50 85M205 30l-70 85M170 30l50 80M80 60l100 50" stroke="#e6e6e6" strokeWidth="2" /><path d={islandRoads} stroke="#eaebea" strokeWidth="2" />
      <path d="M96 30l-10 26-34 24-14 35M130 60l-18 0-6 30-12 25" stroke="#db6586" strokeWidth="2.500" /><path d="M132 36l-24 30-22 49M212 30l-20 40-32 45" stroke="#7a8fc3" strokeWidth="3" />
      <path d="M160 30l-10 30v55" stroke="#a74c92" strokeWidth="3.500" strokeDasharray="5 2" /><path d="M60 80l-22 16-10 20" stroke="#69af94" strokeWidth="3" />
      <g fill="#7b8990"><Labels items={[["Glen Cove", 521, 98, 15, 64], ["Oyster Bay", 693, 91, 15, 68]]} /></g>
    </svg>
  );
}

function ParksMap() {
  return (
    <svg viewBox="826 30 735 735" className="block h-[262.5px] w-full" fontFamily="'Liberation Sans', sans-serif" fill="none">
      <rect x="826" y="30" width="735" height="735" fill="#f4f4f2" />
      <path d={parkRoads + eastRoads} stroke="#e4e4e4" strokeWidth="2" />
      <path d="M904 30l6 20 12 6-12 26-8 33M1010 50l20-20M1310 30l-20 85M1360 30l-10 50 20 35" stroke="#cfd6d5" strokeWidth="4" />
      <path d="M1124 30h28l-30 85h-26ZM1490 30h71v90H1436l14-20 18-4 4-26 10-10Z" fill="#cdd4d6" />
      <path d="M1196 42l56 20-10 24-14 29h-50l20-24ZM1148 72l14-6-10 24-10 10ZM1136 92h12l-4 24h-8ZM1284 54l10 4-6 16-8-4Z" fill="#bdd9c3" />
      <path d="M1140 30l-18 85" stroke="#d68e7e" strokeWidth="2" strokeDasharray="5 4" />
      <g fill="#cf8067"><circle cx="1200" cy="70" r="7" /><circle cx="1212" cy="85" r="7" /><circle cx="1224" cy="89" r="8" /><circle cx="1192" cy="104" r="8" /><circle cx="1220" cy="111" r="7" /><circle cx="1152" cy="115" r="5" /></g>
      <g fill="#929292" stroke="#fff" strokeWidth="2" paintOrder="stroke"><Labels items={[["New Rochelle", 1372, 47, 19, 122], ["Englewood", 986, 102, 20, 98], ["Hackensack", 834, 122, 19, 100]]} /></g>
    </svg>
  );
}

/* ---------- Page ---------- */

/* Keeps the full word space before capitals that would otherwise kern into it */
function Words({ children }: { children: string }) {
  return (
    <>
      {children.split(/(\bAt\b|\bA(?= )|\bYork\b)/).map((part, i) =>
        i % 2 ? <span key={i} className="inline-block">{part}</span> : part,
      )}
    </>
  );
}

type Project = { title: string; place?: string; text?: string; art: React.ReactNode };

const projects: Project[] = [
  { title: "A Cup At Origin - Coffee Consumption Producing Countries", place: "global", art: <CoffeeMap />, text: "The global trading price for green coffee is in the doldrums. On September 17, 2018, the price for one pound of coffee reached a 12-year low of 93.45 cents. For producers, these global prices oftentimes don't even come close to covering the costs of production. So instead of marketing their crop for international export (where the price is determined by the low market), supply chain actors in producing countries look to domestic consumption for the demand needed to sell their crop." },
  { title: "City Lines", place: "New York, USA; Shanghai, China; Paris, France; Tokyo, Japan", art: <CityLinesMap />, text: "These are four maps of different cities around the world. Top Left is Tokyo, Top Right is Paris, Bottom Left is Shanghai, and the Bottom Right is New York. Each have their subway lines shown to compare the density, structure length, and creation years." },
  { title: "Dogs of New York", place: "New York, NY, USA", art: <DogsMap />, text: "\"Dogs of New York\" examines publicly available data from New York City's Open Data Portal detailing all dog licenses filed in the year 2016. The two maps created for the project were built for two courses at Pratt Institute, \"Foundations of Spatial Thinking\" and \"Introduction to Interactive Web Programming\" respectively, and then displayed side-by-side in one cohesive web page. Attempting the same goal in each class the skills learned in each was valuable in exposing the benefits and challenges of respective GIS tools across the field of web mapping as a whole." },
  { title: "Land Temperatures of U.S. Cities", place: "United States", art: <TemperatureMap />, text: "A web map created to allow users to interact with land temperature data of cities in the United States on January 1st between years 1849-2013." },
  { title: "Missed Connections", art: <MissedMap /> },
  { title: "Multiple Disciplinary Removals from School", art: <RemovalsMap /> },
  { title: "Museum and Gallery Hunt", art: <MuseumMap /> },
  { title: "NYC Parks & Eateries", art: <ParksMap /> },
];

function Card({ project }: { project: Project }) {
  return (
    <article className="min-w-0">
      <h4 className="h-[60.5px] text-[18px] leading-[19px] text-[#337ab7]"><a><Words>{project.title}</Words></a></h4>
      <div>{project.art}</div>
      {project.place && <h5 className="my-2.5 text-[14px] leading-[15px]">{project.place}</h5>}
      {project.text && <p className="text-[14px] leading-5"><Words>{project.text}</Words></p>}
    </article>
  );
}

export default function App() {
  return (
    <div className="flex h-[971px] w-full flex-col overflow-hidden bg-white font-['Liberation_Sans',Arial,sans-serif] text-[#333]">
      <div className="min-h-0 flex-1 overflow-hidden">
        <nav className="flex h-[49px] gap-[15px] border-b border-[#e7e7e7] bg-[#f8f8f8] pt-[13px] pl-[162.5px] text-[18px] leading-5 text-[#777]">
          <a>SAVI 780 – Fall 2018</a>
          <a>About</a>
        </nav>
        <main className="ml-[162.5px] w-[1140px]">
          <h1 className="pt-[19px] text-[36px] leading-[39px]">SAVI 780 – Fall 2018 – Student Projects</h1>
          <p className="mt-2.5 text-[21px] leading-[29px]">Final projects for <a className="text-[#337ab7]">Pratt SAVI</a>, SAVI 780.</p>
          <hr className="mt-5 border-[#eee]" />
          <section className="mt-[29.5px] grid grid-cols-4 gap-x-[30px] gap-y-[45px]">
            {projects.map((p) => <Card key={p.title} project={p} />)}
          </section>
        </main>
      </div>
      <div className="h-[3px] shrink-0 bg-[#dee1e6]" />
    </div>
  );
}
